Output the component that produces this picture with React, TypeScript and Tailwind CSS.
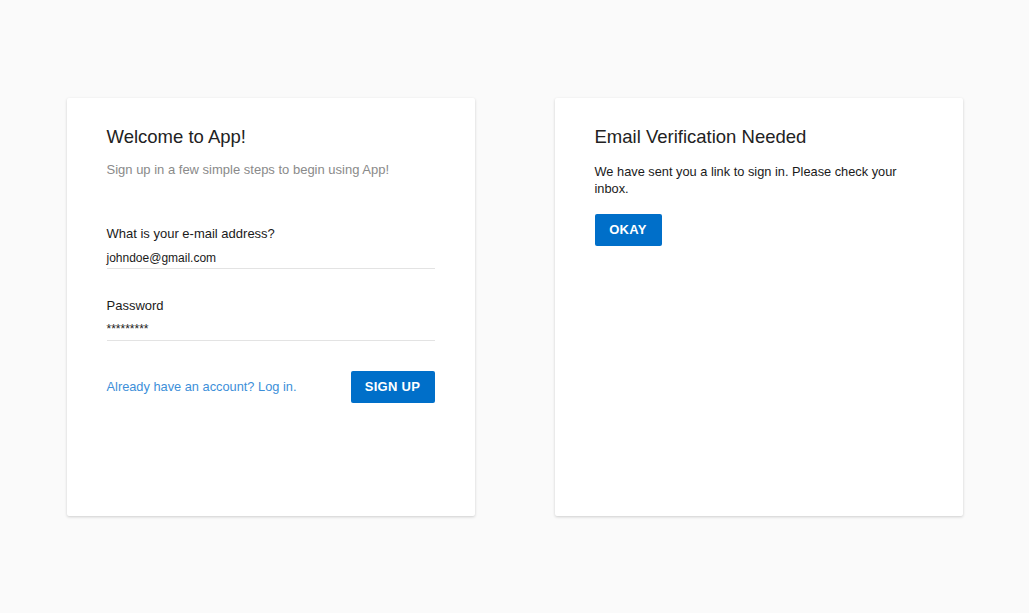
import React from 'react';

export default function App() {
  return (
    <div className="min-h-screen w-full bg-[#fafafa] flex items-center justify-center gap-20 font-['Liberation_Sans',_'Noto_Sans',_sans-serif]">
      {/* Sign up card */}
      <div className="w-[408px] h-[418px] bg-white rounded-[2px] shadow-[0_1px_3px_rgba(0,0,0,0.18)] px-10 pt-[27px]">
        <h1 className="text-[18.5px] leading-6 text-[#222]">Welcome to App!</h1>
        <p className="mt-3 text-[13px] leading-[18px] text-[#8a8a8a]">
          Sign up in a few simple steps to begin using App!
        </p>

        <div className="mt-[46px]">
          <label className="block text-[13px] leading-[18px] text-[#1a1a1a]">What is your e-mail address?</label>
          <div className="mt-[6px] text-[12px] leading-[18px] text-[#1a1a1a] border-b border-[#e3e3e3] pb-px">
            johndoe@gmail.com
          </div>
        </div>

        <div className="mt-[28px]">
          <label className="block text-[13px] leading-[18px] text-[#1a1a1a]">Password</label>
          <div className="mt-[5px] text-[12px] leading-[18px] text-[#1a1a1a] border-b border-[#e3e3e3] pb-[2px]">
            *********
          </div>
        </div>

        <div className="mt-[30px] flex items-center justify-between">
          <a className="text-[12.8px] text-[#3d8fd9] cursor-pointer">Already have an account? Log in.</a>
          <button className="w-[84px] h-8 rounded-[2px] bg-[#006fc9] text-white text-[13px] font-bold tracking-[0.3px]">
            SIGN UP
          </button>
        </div>
      </div>

      {/* Verification card */}
      <div className="w-[408px] h-[418px] bg-white rounded-[2px] shadow-[0_1px_3px_rgba(0,0,0,0.18)] px-10 pt-[27px]">
        <h1 className="text-[18.5px] leading-6 text-[#222]">Email Verification Needed</h1>
        <p className="mt-[14px] text-[12.8px] leading-[17px] text-[#1a1a1a]">
          We have sent you a link to sign in. Please check your
          <br />
          inbox.
        </p>
        <button className="mt-[17px] w-[67px] h-8 rounded-[2px] bg-[#006fc9] text-white text-[13px] font-bold tracking-[0.3px]">
          OKAY
        </button>
      </div>
    </div>
  );
}
